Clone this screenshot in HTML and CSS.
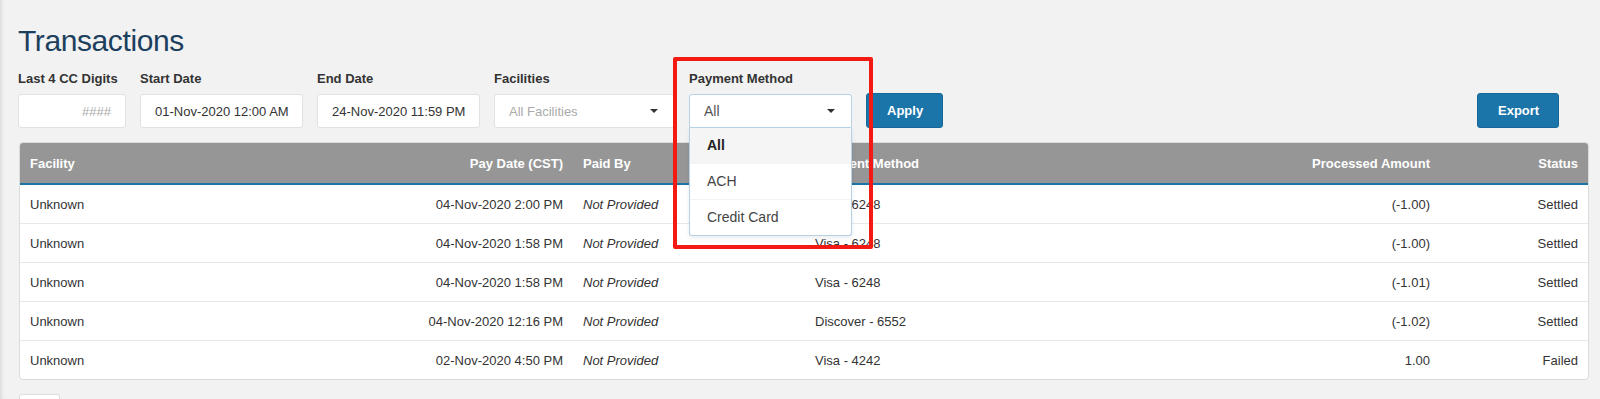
FILE: index.html
```html
<!DOCTYPE html>
<html>
<head>
  <title>Transactions</title>
  <link rel="stylesheet" href="styles.css">
</head>
<body>
  <div class="page">
    <h1 class="page-title">Transactions</h1>

    <div class="filters">
      <div class="field field-cc">
        <label>Last 4 CC Digits</label>
        <div class="input input-right"><span class="placeholder">####</span></div>
      </div>
      <div class="field field-date">
        <label>Start Date</label>
        <div class="input">01-Nov-2020 12:00 AM</div>
      </div>
      <div class="field field-date">
        <label>End Date</label>
        <div class="input">24-Nov-2020 11:59 PM</div>
      </div>
      <div class="field field-facilities">
        <label>Facilities</label>
        <div class="input select">
          <span class="placeholder">All Facilities</span>
          <span class="caret"></span>
        </div>
      </div>
      <div class="field field-method">
        <label>Payment Method</label>
        <div class="input select open">
          <span class="select-value">All</span>
          <span class="caret"></span>
          <ul class="select-menu">
            <li class="selected">All</li>
            <li>ACH</li>
            <li>Credit Card</li>
          </ul>
        </div>
      </div>
      <button class="btn">Apply</button>
      <button class="btn btn-export">Export</button>
    </div>

    <div class="table-wrap">
      <table class="tx-table">
        <colgroup>
          <col style="width: 300px">
          <col style="width: 253px">
          <col style="width: 232px">
          <col style="width: 400px">
          <col style="width: 235px">
          <col style="width: 148px">
        </colgroup>
        <thead>
          <tr>
            <th>Facility</th>
            <th class="right">Pay Date (CST)</th>
            <th>Paid By</th>
            <th>Payment Method</th>
            <th class="right">Processed Amount</th>
            <th class="right">Status</th>
          </tr>
        </thead>
        <tbody id="rows"></tbody>
      </table>
    </div>

    <div class="pager"></div>

    <div class="highlight"></div>
  </div>

  <script>
    const rows = [
      ["Unknown", "04-Nov-2020 2:00 PM", "Visa - 6248", "(-1.00)", "Settled"],
      ["Unknown", "04-Nov-2020 1:58 PM", "Visa - 6248", "(-1.00)", "Settled"],
      ["Unknown", "04-Nov-2020 1:58 PM", "Visa - 6248", "(-1.01)", "Settled"],
      ["Unknown", "04-Nov-2020 12:16 PM", "Discover - 6552", "(-1.02)", "Settled"],
      ["Unknown", "02-Nov-2020 4:50 PM", "Visa - 4242", "1.00", "Failed"]
    ];

    document.getElementById("rows").innerHTML = rows.map(r => `
      <tr>
        <td>${r[0]}</td>
        <td class="right">${r[1]}</td>
        <td><em>Not Provided</em></td>
        <td>${r[2]}</td>
        <td class="right">${r[3]}</td>
        <td class="right">${r[4]}</td>
      </tr>
    `).join("");
  </script>
</body>
</html>
```

FILE: styles.css
```css
:root {
  --page-bg: #f2f2f2;
  --text: #333;
  --title: #1d3f5e;
  --border: #dcdcdc;
  --head-bg: #969696;
  --accent: #1c75a9;
  --muted: #aaa;
}

body {
  margin: 0;
  background: var(--page-bg);
  color: var(--text);
  font-family: 'Liberation Sans', Arial, sans-serif;
  font-size: 13px;
}

.page {
  position: relative;
  height: 399px;
  overflow: hidden;
  padding: 23px 11px 0 18px;
  box-sizing: border-box;
  box-shadow: inset 4px 0 4px -3px rgba(0, 0, 0, 0.12);
}

.page-title {
  margin: 0;
  font-size: 30px;
  font-weight: normal;
  line-height: 36px;
  letter-spacing: -0.4px;
  color: var(--title);
}

/* Filter bar */
.filters {
  display: flex;
  align-items: flex-end;
  gap: 14px;
  margin-top: 12px;
}

.field label {
  display: block;
  font-weight: bold;
  line-height: 16px;
  margin-bottom: 7px;
  color: #333;
}

.field-cc { width: 108px; }
.field-date { width: 163px; }
.field-facilities { width: 181px; }
.field-method { width: 163px; }

.input {
  position: relative;
  display: flex;
  align-items: center;
  height: 34px;
  padding: 0 14px;
  box-sizing: border-box;
  background: #fff;
  border: 1px solid #e2e2e2;
  border-radius: 3px;
  color: #333;
  white-space: nowrap;
}

.input-right {
  justify-content: flex-end;
}

.placeholder {
  color: var(--muted);
}

.select .caret {
  margin-left: auto;
  margin-right: 2px;
  width: 0;
  height: 0;
  border-top: 4px solid #333;
  border-left: 4px solid transparent;
  border-right: 4px solid transparent;
}

.select-value {
  color: #555;
  font-size: 14px;
}

.select.open {
  border-color: #b7d2e4;
  border-bottom-left-radius: 0;
  border-bottom-right-radius: 0;
}

.select-menu {
  position: absolute;
  top: 33px;
  left: -1px;
  right: -1px;
  margin: 0;
  padding: 0;
  list-style: none;
  background: #fff;
  border: 1px solid #b7d2e4;
  border-top: none;
  border-radius: 0 0 3px 3px;
  box-shadow: 0 2px 4px rgba(0, 0, 0, 0.08);
  z-index: 5;
}

.select-menu li {
  height: 35px;
  line-height: 35px;
  padding: 0 17px;
  border-bottom: 1px solid #f3f3f3;
  color: #444;
  font-size: 14px;
}

.select-menu li:last-child {
  border-bottom: none;
}

.select-menu li.selected {
  background: #f5f5f5;
  font-weight: bold;
  color: #222;
}

.btn {
  height: 35px;
  padding: 0 20px;
  background: var(--accent);
  color: #fff;
  border: 1px solid #17679a;
  border-radius: 3px;
  font-family: inherit;
  font-size: 13px;
  font-weight: bold;
  width: 77px;
}

.btn-export {
  width: 82px;
  margin-left: auto;
  margin-right: 30px;
}

/* Table */
.table-wrap {
  margin: 14px 0 0 1px;
  background: #fff;
  border: 1px solid var(--border);
  border-radius: 4px;
  overflow: hidden;
}

.tx-table {
  width: 100%;
  border-collapse: collapse;
  table-layout: fixed;
}

.tx-table th {
  height: 40px;
  padding: 0 10px;
  background: var(--head-bg);
  color: #fff;
  font-weight: bold;
  text-align: left;
  border-bottom: 2px solid var(--accent);
}

.tx-table td {
  height: 38px;
  padding: 0 10px;
  border-bottom: 1px solid #e8e8e8;
  white-space: nowrap;
}

.tx-table tr:last-child td {
  border-bottom: none;
}

.tx-table .right {
  text-align: right;
}

.pager {
  width: 41px;
  height: 30px;
  margin: 14px 0 0 1px;
  background: #fff;
  border: 1px solid var(--border);
  border-radius: 3px;
  box-sizing: border-box;
}

/* Annotation frame around the payment method filter */
.highlight {
  position: absolute;
  left: 673px;
  top: 57px;
  width: 200px;
  height: 192px;
  box-sizing: border-box;
  border: 4px solid #f21a12;
  border-radius: 2px;
  z-index: 10;
}
```
